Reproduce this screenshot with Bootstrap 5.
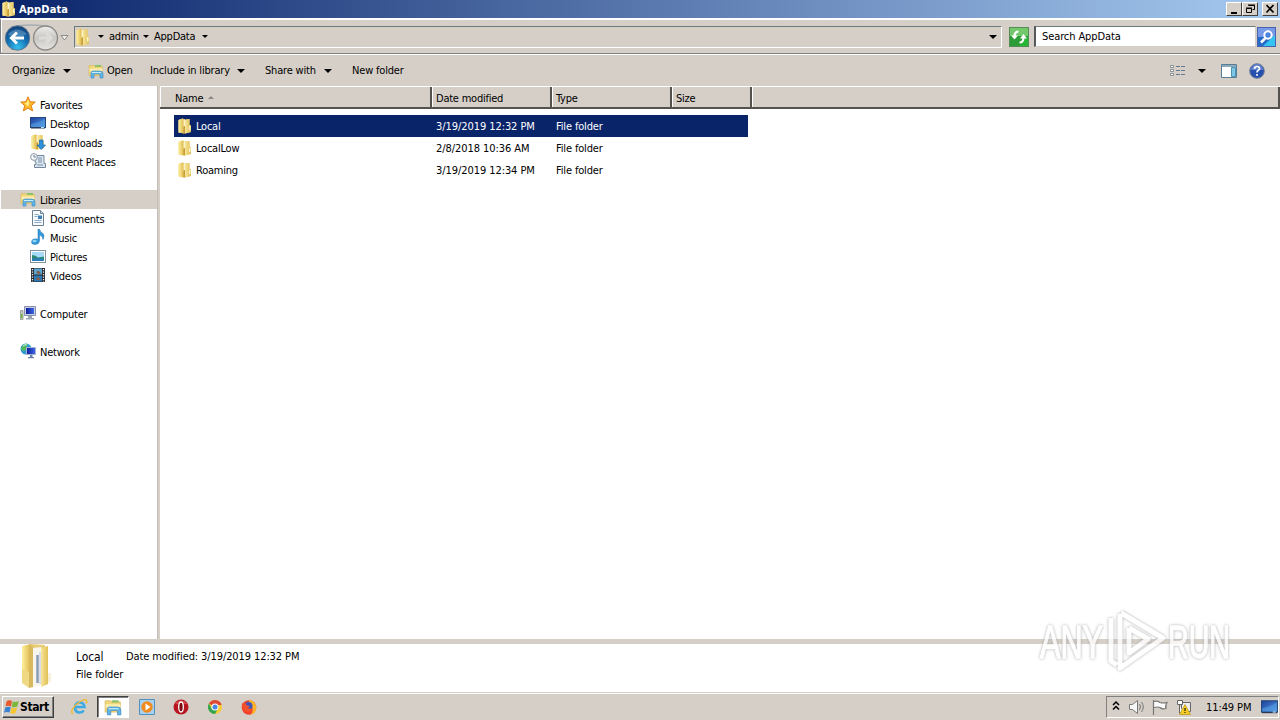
<!DOCTYPE html>
<html lang="en">
<head>
    <meta charset="UTF-8">
    <meta name="viewport" content="width=device-width, initial-scale=1.0">
    <title>AppData</title>
    <link href="https://cdn.jsdelivr.net/npm/bootstrap@5.3.2/dist/css/bootstrap.min.css" rel="stylesheet">
    <style>
        body {
            width: 1280px;
            height: 720px;
            overflow: hidden;
            background: #d5cfc7;
            color: #000;
            font-family: "DejaVu Sans Condensed", "DejaVu Sans", sans-serif;
            font-stretch: condensed;
            font-size: 11px;
            line-height: 14px;
            letter-spacing: -0.23px;
            white-space: nowrap;
        }
        svg { display: block; flex: none; }

        /* title bar */
        .titlebar {
            height: 18px;
            padding: 0 2px 0 1px;
            background: linear-gradient(90deg, #0a246a, #a6caf0);
            color: #fff;
            font-weight: bold;
            letter-spacing: 0.15px;
        }
        .title-text { margin-left: 2px; padding-top: 1px; }
        .win-btn {
            width: 16px;
            height: 14px;
            background: #d5cfc7;
            border: 1px solid;
            border-color: #fff #404040 #404040 #fff;
        }

        /* address bar */
        .address {
            height: 36px;
            border-top: 2px solid #fff;
            border-bottom: 1px solid #808080;
            border-left: 1px solid #808080;
            box-shadow: inset 0 -1px #d5cfc7, inset 1px 0 #fff;
        }
        .path-box {
            width: 928px;
            height: 22px;
            border-top: 1px solid #6c7a7c;
            border-left: 1px solid #6c7a7c;
            border-bottom: 1px solid #fff;
            border-right: 1px solid #fff;
        }
        .path-c1 { margin-left: 7px; }
        .path-t1 { width: 28px; margin-left: 5px; }
        .path-c2 { margin-left: 6px; }
        .path-t2 { width: 43px; margin-left: 5px; }
        .path-c3 { margin-left: 5px; }
        .go-icon { margin-left: 7px; }
        .search-box {
            width: 222px;
            height: 21px;
            margin-left: 5px;
            background: #fff;
            border: 1px solid;
            border-width: 1px 1px 1px 2px;
            border-color: #6c7a7c #d5cfc7 #d5cfc7 #55595a;
            padding: 1px 0 0 6px;
            letter-spacing: -0.1px;
        }
        .seek-icon { margin-left: 1px; }
        .caret-down {
            border: 3px solid transparent;
            border-top-color: #000;
            border-bottom: 0;
        }
        .caret-wide { border-width: 4px 4px 0; }

        /* command bar */
        .commands {
            height: 32px;
            border-top: 1px solid #fff;
            padding-left: 12px;
            letter-spacing: -0.18px;
        }
        .c-organize { width: 51px; }
        .c-lib { margin-left: 17px; }
        .c-open { width: 26px; margin-left: 3px; }
        .c-include { width: 87px; margin-left: 17px; }
        .c-share { width: 59px; margin-left: 20px; }
        .c-new { margin-left: 20px; }
        .tools { padding-right: 15px; }
        .tool-caret { margin: 0 15px 0 12px; }
        .help-icon { margin-left: 12px; }

        .middle { height: 553px; }
        .sidebar {
            width: 157px;
            padding: 9px 0 0 1px;
            background: #fff;
        }
        .side-row { height: 19px; padding-left: 19px; gap: 4px; }
        .side-row span { padding-top: 2px; }
        .side-row svg { margin-top: -1px; }
        .side-sub { padding-left: 29px; }
        .side-gap { margin-top: 19px; }
        .side-active { background: #d5cfc7; }
        .v-split { width: 3px; background: #d5cfc7; border-left: 1px solid #c3bfb8; }

        .files { background: #fff; }
        .file-head {
            height: 23px;
            background: #d5cfc7;
            border-top: 1px solid #fff;
            border-bottom: 2px solid #55524e;
        }
        .head-cell {
            height: 20px;
            border-right: 2px solid #55524e;
            border-left: 1px solid #fff;
            padding: 3px 0 0 3px;
        }
        .w-name { width: 272px; }
        .w-date { width: 120px; }
        .w-type { width: 120px; }
        .w-size { width: 80px; }
        .head-name { padding-left: 14px; }
        .sort-up {
            border: 3px solid transparent;
            border-bottom-color: #8c8883;
            border-top: 0;
            margin: -3px 0 0 5px;
        }
        .file-list { padding: 6px 0 0 14px; }
        .file-row { width: 574px; height: 22px; }
        .file-row span, .file-row .w-date, .file-row .w-type { padding-top: 1px; }
        .file-row svg { margin-top: -1px; }
        .file-row .w-date { letter-spacing: -0.07px; }
        .file-row .w-type { letter-spacing: -0.15px; }
        .file-picked { background: #0a246a; color: #fff; }
        .file-name { width: 262px; padding-left: 3px; gap: 3px; }

        .details {
            height: 53px;
            background: #fff;
            border-top: 5px solid #d5cfc7;
            padding-left: 18px;
            letter-spacing: -0.1px;
        }
        .details-text { padding: 6px 0 0 22px; }
        .details-name { font-size: 12px; width: 50px; }
        .details-type { margin-top: 4px; }

        /* taskbar */
        .taskbar {
            height: 28px;
            border-top: 1px solid #d5cfc7;
            box-shadow: inset 0 1px #fff;
            padding: 3px 1px 0 2px;
        }
        .start-btn {
            width: 52px;
            height: 22px;
            border: 1px solid;
            border-color: #fff #404040 #404040 #fff;
            box-shadow: inset -1px -1px #808080;
            font-weight: bold;
            font-size: 12px;
            letter-spacing: -0.4px;
            padding-left: 1px;
        }
        .task-slot { width: 32px; height: 22px; }
        .task-first { margin: 0 2px 0 9px; }
        .task-next { margin-left: 2px; }
        .task-open {
            background: #fff;
            border: 1px solid;
            border-color: #404040 #fff #fff #404040;
            box-shadow: inset 1px 1px #808080;
        }
        .tray {
            width: 173px;
            height: 22px;
            border: 1px solid;
            border-color: #808080 #fff #fff #808080;
        }
        .tray-icons { margin-left: 4px; }
        .clock { margin-left: 15px; padding-top: 1px; letter-spacing: -0.1px; }
        .watermark {
            left: 1030px;
            top: 600px;
            overflow: visible;
            opacity: .8;
            font-family: "Liberation Sans Narrow", "Liberation Sans", sans-serif;
            font-size: 46px;
            letter-spacing: 0;
            filter: drop-shadow(0 0 1.5px #999);
        }
    </style>
</head>
<body>
    <svg width="0" height="0" class="position-absolute">
        <defs>
            <linearGradient id="gold" x2="1"><stop offset="0" stop-color="#fff0a0"/><stop offset="1" stop-color="#dcb548"/></linearGradient>
            <linearGradient id="gold2" x2="1"><stop offset="0" stop-color="#f7e59a"/><stop offset="1" stop-color="#e0bf55"/></linearGradient>
            <radialGradient id="blueBall" cx=".5" cy=".9" r=".9"><stop offset="0" stop-color="#35c0ee"/><stop offset=".5" stop-color="#1471b4"/><stop offset="1" stop-color="#123f77"/></radialGradient>
            <linearGradient id="greyBall" x2="0" y2="1"><stop offset="0" stop-color="#eeeeec"/><stop offset=".5" stop-color="#c8c6c3"/><stop offset="1" stop-color="#e7e6e4"/></linearGradient>
            <linearGradient id="screen" x2="1" y2="1"><stop offset="0" stop-color="#1d3f9c"/><stop offset="1" stop-color="#4f9be6"/></linearGradient>
            <linearGradient id="night" x2="1"><stop offset="0" stop-color="#0b1b9c"/><stop offset="1" stop-color="#3e68e6"/></linearGradient>
            <symbol id="folder" viewBox="0 0 16 16">
                <path d="M1.500 2l4-1.500 2.500 1 4.500-.5v6l1.500.5v6.500l-6.500 1.500-6-1z" fill="#ecd07a"/>
                <path d="M1.500 2l4-1.500 1.500.7v14.300l-5.500-1z" fill="url(#gold)"/>
                <path d="M8 2l4.500-1v6l1.500.5v6.500l-6 1.500z" fill="url(#gold2)"/>
                <path d="M6.500 9l1.500-7v13.500l-1.500-.5z" fill="#c69f3c"/>
                <path d="M6.500 1.500h1.500v6L6.500 9z" fill="#fbf3c6"/>
                <path d="M12 8h1.500v4H12z" fill="#fff4c4"/>
            </symbol>
            <symbol id="library" viewBox="0 0 16 16">
                <path d="M1 2.500h5l1 1h7.500v9H1z" fill="#f2d67a" stroke="#d6b355" stroke-width=".6"/>
                <path d="M7 2h6v2H7z" fill="#8bc36b"/>
                <path d="M1.500 5.500h13v3h-13z" fill="#fbeeb0"/>
                <path d="M3 15V10q0-2 2-2h7q3 0 3 3v4h-3v-3q0-1-1-1H7q-1 0-1 1v3z" fill="#62b4e3" stroke="#3b8bc2" stroke-width=".6"/>
                <path d="M4 9.500h9" stroke="#c9ecfb"/>
            </symbol>
            <symbol id="star" viewBox="0 0 16 16">
                <path d="M8 .8l2.100 4.900 5.200.4-4 3.500 1.300 5.300L8 12.100l-4.600 2.800 1.300-5.300-4-3.500 5.200-.4z" fill="#fcb828" stroke="#e07f1d"/>
                <path d="M8 3.500l1.300 3.200-1.300 4-3.500-3.600 2.300-.4z" fill="#fff08a"/>
            </symbol>
            <symbol id="desktop" viewBox="0 0 16 16">
                <rect x=".5" y="2.500" width="15" height="10" fill="url(#screen)" stroke="#254679"/>
                <path d="M1 9q7-1 14-5v8H1z" fill="#62aeee" opacity=".45"/>
                <path d="M1 12.500h14v1H1z" fill="#26344e"/><path d="M11 12.500h3" stroke="#bce2f4"/>
            </symbol>
            <symbol id="down" viewBox="0 0 16 16">
                <use href="#folder" width="16" height="16"/>
                <path d="M9.500 6h3.500v5h2.500L11.200 15.500 7 11h2.500z" fill="#2e91dd" stroke="#1767ad" stroke-width=".7"/>
            </symbol>
            <symbol id="recent" viewBox="0 0 16 16">
                <path d="M5 2.500h9v8h1.500v4H4.500v-3H6V9H5z" fill="#dce7f0" stroke="#72879d"/>
                <path d="M8 5h4M8 7h4M8 9h4M7 12h6" stroke="#7590aa"/>
                <circle cx="4" cy="4" r="3.400" fill="#f4f7f9" stroke="#8b99a6"/><path d="M4 2v2h2" fill="none" stroke="#4c6279" stroke-width=".8"/>
            </symbol>
            <symbol id="doc" viewBox="0 0 16 16">
                <path d="M2.500.5h8l3 3v12h-11z" fill="#f7fbff" stroke="#6f8090"/><path d="M10.500.5v3h3" fill="#c6d8e8" stroke="#6f8090"/>
                <path d="M4.500 4.500h4M4.500 6.500h3M4.500 10.500h7M4.500 12.500h7" stroke="#8aa7c4"/><path d="M8 5.500h4v3.500H8z" fill="#3c7fb9"/>
            </symbol>
            <symbol id="music" viewBox="0 0 16 16">
                <path d="M8 0h1.500q.5 3 3.500 4.500 2 2 0 6 0-3.500-3.500-4.500v6q-.5 3.500-4.500 3.500-3.500 0-3.500-2.500 0-3 4-3.200 1.500 0 2.500.5z" fill="#369bd9" stroke="#1e76b8" stroke-width=".5"/>
                <ellipse cx="4.500" cy="12" rx="2" ry="1.200" fill="#8cd5f8"/>
            </symbol>
            <symbol id="picture" viewBox="0 0 16 16">
                <rect x=".5" y="2.500" width="15" height="12" fill="#fff" stroke="#81919b"/><path d="M2 4h12v9H2z" fill="#a5dbf7"/>
                <path d="M2 7q4 0 6 2.500l6-1V13H2z" fill="#2c8a72"/><path d="M2 11q6-2 12 0v2H2z" fill="#2a7eb8"/>
            </symbol>
            <symbol id="video" viewBox="0 0 16 16">
                <path d="M1 1h14v14H1z" fill="#27282e"/><path d="M4 1.500h8v6H4z" fill="#5aa4cd"/><path d="M4 8.500h8v6H4z" fill="#2e78b4"/>
                <path d="M6 5.500l2-2 3 2.500-2 1zM6 13l2-3 3 3z" fill="#8d5a48"/>
                <path d="M2.500 2v13M13.500 2v13" stroke="#e8edf0" stroke-width="1.300" stroke-dasharray="1.200 1.300"/>
            </symbol>
            <symbol id="computer" viewBox="0 0 16 16">
                <path d="M.5 5.500h2.500v9H.5z" fill="#c7ccc4" stroke="#9ba599"/><path d="M1 9h1.500v4H1z" fill="#6cb34b"/>
                <path d="M4.500 1.500h11v9h-11z" fill="#c9cfe0" stroke="#8790b0"/><path d="M6 3h8v6H6z" fill="url(#night)"/>
                <path d="M8 11h4v2H8zM6 13h8v1.500H6z" fill="#9da5b4"/>
            </symbol>
            <symbol id="network" viewBox="0 0 16 16">
                <circle cx="6" cy="6" r="5.500" fill="#2d9ad0"/><path d="M2 3q3-3 6-2l-2 3 1 2-3 2-3-1zM6 9l3-1-1 3z" fill="#53b85b"/><path d="M3 3q2-2 4-1" stroke="#d7f5f7" fill="none"/>
                <path d="M6.500 4.500h9v7h-9z" fill="url(#night)" stroke="#a6b4d2"/><path d="M10 12h2.500v2H10zM8 14h6v1.300H8z" fill="#6c7fa8"/>
            </symbol>
        </defs>
    </svg>

    <div class="titlebar d-flex align-items-center">
        <svg width="16" height="16"><use href="#folder"/></svg>
        <span class="title-text flex-grow-1">AppData</span>
        <div class="win-btn"><svg width="14" height="12"><path d="M4 9h6v2H4z"/></svg></div>
        <div class="win-btn"><svg width="14" height="12"><path d="M5.500 2.500h6v4h-2M5 2h7" fill="none" stroke="#000"/><path d="M3.500 5.500h5v4h-5zM3 5h6" fill="none" stroke="#000"/></svg></div>
        <div class="win-btn ms-1"><svg width="14" height="12"><path d="M3.500 2l7 7.500M10.500 2l-7 7.500" stroke="#000" stroke-width="1.700"/></svg></div>
    </div>

    <div class="address d-flex align-items-center">
        <svg width="73" height="32" viewBox="0 0 73 32">
            <path d="M10 6q20-4 39 0M10 28q7 1 13-3M37 27q7 3 13-1" stroke="#a7adb3" stroke-width="1.500" fill="none"/>
            <circle cx="44.500" cy="17" r="12" fill="url(#greyBall)" stroke="#8b8a88" stroke-width="1.300"/>
            <path d="M38 17h11M45 12l5 5-5 5" fill="none" stroke="#dedcda" stroke-width="3"/>
            <circle cx="16.500" cy="17" r="12.200" fill="url(#blueBall)" stroke="#5f7890"/>
            <path d="M7 13q9-9 19 0l-4 2H9z" fill="#8db8d8" opacity=".4"/>
            <path d="M23 17H11M16 11.500L10.500 17l5.500 5.500" fill="none" stroke="#fff" stroke-width="3"/>
            <path d="M60 14.500h7L63.500 19z" fill="#eee" stroke="#8b8985"/>
        </svg>
        <div class="path-box d-flex align-items-center">
            <svg width="16" height="18" viewBox="0 0 16 16" preserveAspectRatio="none"><use href="#folder"/></svg>
            <div class="caret-down path-c1"></div><span class="path-t1">admin</span>
            <div class="caret-down path-c2"></div><span class="path-t2">AppData</span>
            <div class="caret-down path-c3"></div>
            <div class="caret-down caret-wide ms-auto me-1"></div>
        </div>
        <svg class="go-icon" width="20" height="20"><rect width="20" height="20" fill="#2c9c37"/><path d="M1 1h18v8H1z" fill="#73c86c"/><path d="M10 19h9V9z" fill="#25b735"/><path d="M.5.500h19v19H.5z" fill="none" stroke="#568c58"/><path d="M9.500 4.500q-4 0-4 5" fill="none" stroke="#fff" stroke-width="2.200"/><path d="M2 8.500h7l-3.500 4z" fill="#fff"/><path d="M10.500 15.500q4 0 4-5" fill="none" stroke="#fff" stroke-width="2.200"/><path d="M11 11.500h7L14.500 7z" fill="#fff"/></svg>
        <div class="search-box d-flex align-items-center">Search AppData</div>
        <svg class="seek-icon" width="19" height="20"><rect width="19" height="20" fill="#286ac9"/><path d="M1 1h17v9H1z" fill="#7898e8"/><path d="M6 19h12V8z" fill="#36c5f2"/><path d="M.5.500h18v19H.5z" fill="none" stroke="#4964ac"/><circle cx="11" cy="8" r="3.700" fill="#4a82de" stroke="#fff" stroke-width="2"/><path d="M8.500 11L4 15.500" stroke="#fff" stroke-width="2.500"/></svg>
    </div>

    <div class="commands d-flex align-items-center">
        <span class="c-organize">Organize</span><div class="caret-down caret-wide"></div>
        <svg class="c-lib" width="16" height="16"><use href="#library"/></svg>
        <span class="c-open">Open</span>
        <span class="c-include">Include in library</span><div class="caret-down caret-wide"></div>
        <span class="c-share">Share with</span><div class="caret-down caret-wide"></div>
        <span class="c-new">New folder</span>
        <div class="ms-auto d-flex align-items-center tools">
            <svg width="16" height="14"><path d="M.5 1.500h3v2h-3zM.5 5.500h3v2h-3zM.5 9.500h3v2h-3z" fill="#fff" stroke="#8a9094"/><path d="M6 2.500h4m1 0h4M6 6.500h4m1 0h4M6 10.500h4m1 0h4" stroke="#647a8c"/></svg>
            <div class="caret-down caret-wide tool-caret"></div>
            <svg width="16" height="14"><path d="M.5.500h15v13H.5z" fill="#fff" stroke="#557d96"/><path d="M1 1h14v2H1z" fill="#8daabb"/><path d="M10.500 3.500h4v9h-4z" fill="#7cc7e7" stroke="#4e91b2"/></svg>
            <svg class="help-icon" width="16" height="16"><circle cx="8" cy="8" r="7.300" fill="#2650ae" stroke="#747b9d"/><path d="M2 7a6 6 0 0112 0z" fill="#839ee1" opacity=".6"/><path d="M5.500 6q0-2.500 2.500-2.500t2.500 2q0 1.200-1.500 2-1 .5-1 2M8 11v1.800" fill="none" stroke="#fff" stroke-width="1.700"/></svg>
        </div>
    </div>

    <div class="middle d-flex">
        <div class="sidebar">
            <div class="side-row d-flex align-items-center"><svg width="16" height="16"><use href="#star"/></svg><span>Favorites</span></div>
            <div class="side-row side-sub d-flex align-items-center"><svg width="16" height="16"><use href="#desktop"/></svg><span>Desktop</span></div>
            <div class="side-row side-sub d-flex align-items-center"><svg width="16" height="16"><use href="#down"/></svg><span>Downloads</span></div>
            <div class="side-row side-sub d-flex align-items-center"><svg width="16" height="16"><use href="#recent"/></svg><span>Recent Places</span></div>
            <div class="side-row side-gap side-active d-flex align-items-center"><svg width="16" height="16"><use href="#library"/></svg><span>Libraries</span></div>
            <div class="side-row side-sub d-flex align-items-center"><svg width="16" height="16"><use href="#doc"/></svg><span>Documents</span></div>
            <div class="side-row side-sub d-flex align-items-center"><svg width="16" height="16"><use href="#music"/></svg><span>Music</span></div>
            <div class="side-row side-sub d-flex align-items-center"><svg width="16" height="16"><use href="#picture"/></svg><span>Pictures</span></div>
            <div class="side-row side-sub d-flex align-items-center"><svg width="16" height="16"><use href="#video"/></svg><span>Videos</span></div>
            <div class="side-row side-gap d-flex align-items-center"><svg width="16" height="16"><use href="#computer"/></svg><span>Computer</span></div>
            <div class="side-row side-gap d-flex align-items-center"><svg width="16" height="16"><use href="#network"/></svg><span>Network</span></div>
        </div>
        <div class="v-split"></div>
        <div class="files flex-grow-1">
            <div class="file-head d-flex">
                <div class="head-cell w-name head-name d-flex align-items-center">Name<div class="sort-up"></div></div>
                <div class="head-cell w-date d-flex align-items-center">Date modified</div>
                <div class="head-cell w-type d-flex align-items-center">Type</div>
                <div class="head-cell w-size d-flex align-items-center">Size</div>
                <div class="head-cell flex-grow-1"></div>
            </div>
            <div class="file-list">
                <div class="file-row file-picked d-flex align-items-center">
                    <div class="file-name d-flex align-items-center"><svg width="16" height="16"><use href="#folder"/></svg><span>Local</span></div>
                    <div class="w-date">3/19/2019 12:32 PM</div><div class="w-type">File folder</div>
                </div>
                <div class="file-row d-flex align-items-center">
                    <div class="file-name d-flex align-items-center"><svg width="16" height="16"><use href="#folder"/></svg><span>LocalLow</span></div>
                    <div class="w-date">2/8/2018 10:36 AM</div><div class="w-type">File folder</div>
                </div>
                <div class="file-row d-flex align-items-center">
                    <div class="file-name d-flex align-items-center"><svg width="16" height="16"><use href="#folder"/></svg><span>Roaming</span></div>
                    <div class="w-date">3/19/2019 12:34 PM</div><div class="w-type">File folder</div>
                </div>
            </div>
        </div>
    </div>

    <div class="details d-flex">
        <svg width="36" height="46" viewBox="0 0 36 46">
            <path d="M4 2l9-2v42l-9-5z" fill="url(#gold)"/><path d="M13 0l14 1v38l-14 4z" fill="#e6cc78"/>
            <path d="M15 4l8-1v38l-8 2z" fill="#f7f5ec"/><path d="M19.500 11v28" stroke="#8b9cbb" stroke-width="2.500"/><path d="M22 8v32" stroke="#d8dfe9" stroke-width="2"/>
            <path d="M23 4l7-2v38l-7 3z" fill="url(#gold2)"/><path d="M4 25l7 3v16l-7-5z" fill="#efd985"/><path d="M11 0l4 3v40l-4 1z" fill="#d9b95d"/>
            <path d="M30 29h3v9l-3 1z" fill="#f7f1dc"/>
        </svg>
        <div class="details-text">
            <div class="d-flex"><span class="details-name">Local</span><span>Date modified: 3/19/2019 12:32 PM</span></div>
            <div class="details-type">File folder</div>
        </div>
    </div>

    <div class="taskbar d-flex">
        <div class="start-btn d-flex align-items-center">
            <svg width="16" height="16"><path d="M2.500 2.500Q5 .5 8 2L7 7.500Q4 6 1.500 7.500z" fill="#e8592b"/><path d="M8.800 2.500q3 1 6-.5l-1.500 5.500q-3 1.500-5.500.3z" fill="#7bb83a"/><path d="M1.300 8.500Q4 7 6.800 8.300L5.500 13.500q-3-1.300-5.500.2z" fill="#3a83d0"/><path d="M7.600 8.700q2.700 1.200 5.500-.2l-1.500 5.500q-2.500 1.300-5.300 0z" fill="#f6c52e"/></svg>Start
        </div>
        <div class="task-slot task-first d-flex align-items-center justify-content-center">
            <svg width="18" height="18"><path d="M14.500 9H5q.3-4.500 4.700-4.500Q14 4.500 14.500 9zM5 10q.5 4.500 4.500 4.500 2.800 0 4.300-2" fill="none" stroke="#3cabe4" stroke-width="2.500"/><path d="M3 16Q-1 13 8 5q7-5 8.500-2.500.8 1-.5 3" fill="none" stroke="#efba37" stroke-width="1.500"/></svg>
        </div>
        <div class="task-slot task-open d-flex align-items-center justify-content-center"><svg width="18" height="18" viewBox="0 0 16 16"><use href="#library"/></svg></div>
        <div class="task-slot task-next d-flex align-items-center justify-content-center">
            <svg width="16" height="16"><path d="M.5.500h15v15H.5z" fill="#a9d0ec" stroke="#4b91c4"/><circle cx="8" cy="8" r="5.700" fill="#f18b20"/><path d="M6.500 4.500l5 3.500-5 3.500z" fill="#fff"/></svg>
        </div>
        <div class="task-slot task-next d-flex align-items-center justify-content-center">
            <svg width="16" height="16"><circle cx="8" cy="8" r="7.500" fill="#b71520"/><path d="M2 5a7 7 0 0112 0z" fill="#e26c6c" opacity=".6"/><ellipse cx="8" cy="8" rx="2.300" ry="5" fill="#7a0910" stroke="#fff" stroke-width="1.300"/></svg>
        </div>
        <div class="task-slot task-next d-flex align-items-center justify-content-center">
            <svg width="16" height="16"><circle cx="8" cy="8" r="7" fill="#f8cc37"/><path d="M8 8L1.900 4.500A7 7 0 0114.100 4.500L14.500 6H8z" fill="#dc4939"/><path d="M1.900 4.500A7 7 0 008 15l3-5.500L5 10z" fill="#35a554"/><circle cx="8" cy="8" r="3.500" fill="#fff"/><circle cx="8" cy="8" r="2.500" fill="#4785e9"/></svg>
        </div>
        <div class="task-slot task-next d-flex align-items-center justify-content-center">
            <svg width="16" height="16"><circle cx="8" cy="8.500" r="7.300" fill="#f2402f"/><path d="M8 .5q7 2 7.300 8 0 6-6.300 7.300 4-3 2-7.500L8 4z" fill="#fcb52a"/><circle cx="7.500" cy="7" r="4" fill="#4354b8"/><path d="M.8 5q2-2 3.200-1l2 2.500 3 .5q-1.500 1-2 2 2 1.500 4.500.3-1 4.200-5 3.700Q.8 12 .8 5z" fill="#f4502c"/></svg>
        </div>
        <div class="tray d-flex align-items-center ms-auto">
            <svg class="tray-icons" width="80" height="20" viewBox="0 0 80 20">
                <path d="M2 8l3-3 3 3M2 12.500l3-3 3 3" fill="none" stroke="#000" stroke-width="1.500"/>
                <path d="M18.500 7.500h3l5-4v13l-5-4h-3z" fill="#f7f7f7" stroke="#777"/>
                <path d="M28.500 7q2 3 0 6M30.500 5q3.500 5 0 10" fill="none" stroke="#777"/>
                <path d="M42.500 3v15M43 4.500q3-1 6 1 3 1 7 0-2 3-1 6-4 1-6-1-2-1-6 0" fill="#fafafa" stroke="#777" stroke-width="1.200"/>
                <path d="M70.500 5.500h9v9h-9z" fill="#eee" stroke="#666"/><path d="M66.500 3.500h5v4h-5zM68.500 8v8h4" fill="#fff" stroke="#666"/>
                <path d="M74 7.500l5.500 10h-11z" fill="#f4cb23" stroke="#b99413" stroke-width=".7"/><path d="M74 11v3M74 15v1" stroke="#000"/>
            </svg>
            <span class="clock">11:49 PM</span>
            <svg class="ms-auto" width="17" height="18" viewBox="0 0 16 16" preserveAspectRatio="none"><use href="#desktop"/></svg>
        </div>
    </div>

    <svg class="watermark position-absolute" width="220" height="84">
        <g fill="#fff" stroke="#fff" stroke-width="1.500">
            <text x="10" y="58" textLength="63" lengthAdjust="spacingAndGlyphs">ANY</text>
            <text x="138" y="58" textLength="62" lengthAdjust="spacingAndGlyphs">RUN</text>
        </g>
        <path d="M81 18v43l6 4M91 13l42 25-43 30V14M99 28v25l19-14-19-11" fill="none" stroke="#fff" stroke-width="5" stroke-linejoin="round"/>
    </svg>
    <script src="https://cdn.jsdelivr.net/npm/bootstrap@5.3.2/dist/js/bootstrap.bundle.min.js"></script>
</body>
</html>
